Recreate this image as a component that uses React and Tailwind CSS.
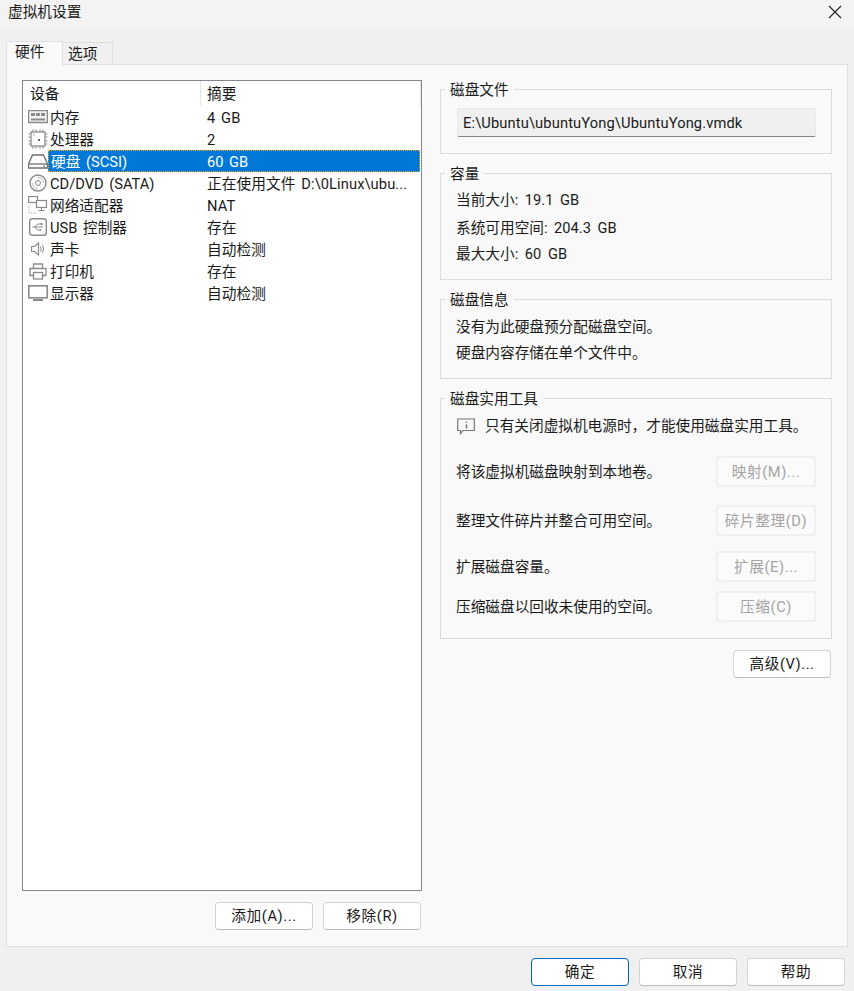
const font = { fontFamily: 'Roboto, "Noto Sans CJK SC", sans-serif' }

const devices = [
    { name: '内存', value: '4 GB', icon: MemoryIcon },
    { name: '处理器', value: '2', icon: CpuIcon },
    { name: '硬盘 (SCSI)', value: '60 GB', icon: DiskIcon, selected: true },
    { name: 'CD/DVD (SATA)', value: '正在使用文件 D:\\0Linux\\ubu...', icon: CdIcon },
    { name: '网络适配器', value: 'NAT', icon: NetIcon },
    { name: 'USB 控制器', value: '存在', icon: UsbIcon },
    { name: '声卡', value: '自动检测', icon: SoundIcon },
    { name: '打印机', value: '存在', icon: PrinterIcon },
    { name: '显示器', value: '自动检测', icon: MonitorIcon },
]

function MemoryIcon() {
    return (
        <svg width="20" height="14" viewBox="0 0 20 14" fill="none" stroke="#8a8a8a">
            <rect x="0.5" y="0.5" width="19" height="12" fill="#f4f4f4" strokeWidth="1.5" />
            <rect x="3" y="3" width="4" height="3" fill="#8a8a8a" stroke="none" />
            <rect x="8" y="3" width="4" height="3" fill="#8a8a8a" stroke="none" />
            <rect x="13" y="3" width="4" height="3" fill="#8a8a8a" stroke="none" />
            <path d="M3 9.5h14" strokeWidth="2" />
        </svg>
    )
}

function CpuIcon() {
    return (
        <svg width="20" height="20" viewBox="0 0 20 20" fill="none" stroke="#8a8a8a">
            <rect x="3" y="3" width="14" height="14" strokeWidth="1.3" />
            <path d="M5 0.500v2M8 0.500v2M12 0.500v2M15 0.500v2M5 17.500v2M8 17.500v2M12 17.500v2M15 17.500v2M0.500 5h2M0.500 8h2M0.500 12h2M0.500 15h2M17.500 5h2M17.500 8h2M17.500 12h2M17.500 15h2" strokeWidth="1.200" />
            <rect x="10" y="10" width="2" height="2" fill="#666" stroke="none" />
            <rect x="5" y="5" width="1.500" height="1.500" fill="#aaa" stroke="none" />
        </svg>
    )
}

function DiskIcon() {
    return (
        <svg width="20" height="15" viewBox="0 0 20 15" fill="none" stroke="#6f6f6f">
            <path d="M4.500 1h11l4 9v4H0.500v-4z" strokeWidth="1.300" />
            <path d="M1 10h18" strokeWidth="1.300" />
            <rect x="15" y="11.500" width="2" height="1.500" fill="#999" stroke="none" />
        </svg>
    )
}

function CdIcon() {
    return (
        <svg width="18" height="18" viewBox="0 0 18 18" fill="none" stroke="#8a8a8a">
            <circle cx="9" cy="9" r="8" strokeWidth="1.400" />
            <circle cx="9" cy="9" r="2.500" />
            <path d="M9 3.500a5.500 5.500 0 0 1 5.500 5.500" stroke="#bbb" />
            <path d="M9 14.500a5.500 5.500 0 0 1-5.500-5.500" stroke="#bbb" />
        </svg>
    )
}

function NetIcon() {
    return (
        <svg width="20" height="18" viewBox="0 0 20 18" fill="none" stroke="#8a8a8a">
            <rect x="0.500" y="0.500" width="9" height="6" strokeWidth="1.200" />
            <rect x="8.500" y="4.500" width="10" height="7" fill="#fff" strokeWidth="1.200" />
            <path d="M13.500 11.500v3M10.500 14.500h6" />
            <path d="M1 9v8h8" strokeDasharray="1 1" stroke="#aaa" />
        </svg>
    )
}

function UsbIcon() {
    return (
        <svg width="18" height="18" viewBox="0 0 18 18" fill="none" stroke="#8a8a8a">
            <rect x="0.700" y="0.700" width="16.600" height="16.600" rx="2.500" strokeWidth="1.400" />
            <path d="M3.500 9h10.500M6 9l2.500-3h3M6 9l2.500 3h2.500" />
            <rect x="11.500" y="5" width="2" height="2" fill="#8a8a8a" stroke="none" />
            <circle cx="11.500" cy="12" r="1" fill="#8a8a8a" stroke="none" />
        </svg>
    )
}

function SoundIcon() {
    return (
        <svg width="14" height="14" viewBox="0 0 14 14" fill="none" stroke="#8a8a8a">
            <path d="M0.500 4.500h3l4-3.500v12l-4-3.500h-3z" strokeWidth="1.200" />
            <path d="M9.500 4.500q1.500 2.500 0 5M11.500 3q2 4 0 8" />
        </svg>
    )
}

function PrinterIcon() {
    return (
        <svg width="18" height="17" viewBox="0 0 18 17" fill="none" stroke="#8a8a8a">
            <path d="M4.500 5.500v-4.500h9v4.500" strokeWidth="1.300" />
            <path d="M4 12.500h-3v-7h16v7h-3" strokeWidth="1.300" />
            <rect x="4.500" y="9.500" width="9" height="6.500" strokeWidth="1.300" />
        </svg>
    )
}

function MonitorIcon() {
    return (
        <svg width="20" height="16" viewBox="0 0 20 16" fill="none" stroke="#8a8a8a">
            <rect x="0.800" y="0.800" width="18.400" height="12" strokeWidth="1.600" />
            <path d="M5 15h10" strokeWidth="2" />
        </svg>
    )
}

function InfoIcon() {
    return (
        <svg width="18" height="17" viewBox="0 0 18 17" fill="none" stroke="#777">
            <path d="M0.700 1h16.600v11.500H6l-2.500 3v-3H0.700z" strokeWidth="1.200" />
            <path d="M9.500 3.500v1.500M9.500 6.500v4" strokeWidth="1.500" />
        </svg>
    )
}

function Button({ children, disabled, primary, className }) {
    if (disabled) {
        return (
            <div className={`flex items-center justify-center rounded-[1px] bg-[#f0f0f0] p-[1px] ${className}`}>
                <div className="flex h-full w-full items-center justify-center rounded-[4px] border border-[#f0f0f0] bg-[#fbfbfb] tracking-[0.6px] text-[#a3a3a3]">
                    {children}
                </div>
            </div>
        )
    }
    return (
        <div className={`flex h-[28px] w-[98px] items-center justify-center rounded-[4px] border bg-white tracking-[0.6px] text-[#1a1a1a] ${primary ? 'border-[#0067c0]' : 'border-b-[#bdbdbd] border-[#d4d4d4]'} ${className || ''}`}>
            {children}
        </div>
    )
}

function Group({ title, className, children }) {
    return (
        <div className={`relative border border-[#dcdcdc] ${className}`}>
            <span className="absolute left-[4px] top-[-10px] bg-[#f9f9f9] px-[5px] leading-[20px] text-[#1a1a1a]">{title}</span>
            {children}
        </div>
    )
}

function ToolRow({ label, button, className }) {
    return (
        <div className={`flex items-center justify-between pl-[15px] pr-[15px] ${className}`}>
            <span className="whitespace-nowrap">{label}</span>
            <Button disabled className="h-[31px] w-[100px]">{button}</Button>
        </div>
    )
}

export default function App() {
    return (
        <div style={font} className="flex h-[991px] w-[854px] flex-col bg-[#f0f0f0] text-[14.67px] leading-[20px] text-[#1a1a1a] [word-spacing:2px]">
            <div className="flex h-[30px] items-start justify-between bg-[#f3f3f3] pl-[8px] pr-[12px] pt-[2px]">
                <span>虚拟机设置</span>
                <svg className="mt-[3px]" width="14" height="14" viewBox="0 0 14 14" stroke="#222" strokeWidth="1.100"><path d="M1 1l12 12M13 1L1 13" /></svg>
            </div>

            <div className="relative z-10 flex h-[34px] items-end pl-[6px]">
                <div className="mb-[-1px] flex h-[24px] w-[57px] items-center border border-b-0 border-[#e0e0e0] bg-[#f9f9f9] pb-[3px] pl-[8px]">硬件</div>
                <div className="flex h-[22px] w-[50px] items-center border border-l-0 border-b-0 border-[#e0e0e0] bg-[#f0f0f0] pl-[5px]">选项</div>
            </div>

            <div className="mx-[6px] flex h-[883px] border border-[#e0e0e0] bg-[#f9f9f9] pl-[15px] pt-[15px]">
                <div className="flex w-[400px] flex-col">
                    <div className="h-[811px] border border-[#828790] bg-white">
                        <div className="flex h-[25px] items-center">
                            <div className="flex h-full w-[178px] items-center border-r border-[#e5e5e5] pl-[7px] pt-[1px]">设备</div>
                            <div className="flex h-full flex-1 items-center border-r border-[#e5e5e5] pl-[6px] pt-[1px]">摘要</div>
                        </div>
                        {devices.map((d, i) => (
                            <div key={i} className="flex h-[22px] items-center">
                                <div className="flex w-[25px] shrink-0 items-center justify-center pl-[4px]">
                                    <d.icon />
                                </div>
                                {d.selected ? (
                                    <div className="mr-[1px] flex h-[22px] flex-1 items-center border border-dotted border-[#f5a623] bg-[#0078d7] pl-[2px] pt-[1px] text-white">
                                        <span className="w-[156px]">{d.name}</span>
                                        <span>{d.value}</span>
                                    </div>
                                ) : (
                                    <div className="flex flex-1 items-center pl-[2px] pt-[1px]">
                                        <span className="w-[157px]">{d.name}</span>
                                        <span className="whitespace-nowrap tracking-[0.1px]">{d.value}</span>
                                    </div>
                                )}
                            </div>
                        ))}
                    </div>
                    <div className="mt-[11px] flex justify-end gap-[10px] pr-[1px]">
                        <Button>添加(A)...</Button>
                        <Button>移除(R)</Button>
                    </div>
                </div>

                <div className="ml-[18px] flex w-[392px] flex-col pt-[9px]">
                    <Group title="磁盘文件" className="h-[65px] px-[16px] pt-[18px]">
                        <div className="flex h-[29px] w-[359px] items-center rounded-[2px] border border-[#e8e8e8] border-b-[#868686] bg-[#f0f0f0] pl-[5px] tracking-[0.14px]">
                            E:\Ubuntu\ubuntuYong\UbuntuYong.vmdk
                        </div>
                    </Group>

                    <Group title="容量" className="mt-[19px] h-[107px] px-[15px] pt-[16px] [word-spacing:3px]">
                        <div>当前大小: 19.1 GB</div>
                        <div className="mt-[8px]">系统可用空间: 204.3 GB</div>
                        <div className="mt-[6px]">最大大小: 60 GB</div>
                    </Group>

                    <Group title="磁盘信息" className="mt-[19px] h-[80px] px-[15px] pt-[17px]">
                        <div>没有为此硬盘预分配磁盘空间。</div>
                        <div className="mt-[6px]">硬盘内容存储在单个文件中。</div>
                    </Group>

                    <Group title="磁盘实用工具" className="mt-[19px] h-[241px] pt-[17px]">
                        <div className="flex items-center pl-[16px]">
                            <InfoIcon />
                            <span className="ml-[10px] whitespace-nowrap">只有关闭虚拟机电源时，才能使用磁盘实用工具。</span>
                        </div>
                        <ToolRow label="将该虚拟机磁盘映射到本地卷。" button="映射(M)..." className="mt-[20px]" />
                        <ToolRow label="整理文件碎片并整合可用空间。" button="碎片整理(D)" className="mt-[18px]" />
                        <ToolRow label="扩展磁盘容量。" button="扩展(E)..." className="mt-[15px]" />
                        <ToolRow label="压缩磁盘以回收未使用的空间。" button="压缩(C)" className="mt-[9px]" />
                    </Group>

                    <div className="mt-[11px] flex justify-end pr-[1px]">
                        <Button>高级(V)...</Button>
                    </div>
                </div>
            </div>

            <div className="mt-[11px] flex justify-end gap-[10px] pr-[9px]">
                <Button primary>确定</Button>
                <Button>取消</Button>
                <Button>帮助</Button>
            </div>
        </div>
    )
}
